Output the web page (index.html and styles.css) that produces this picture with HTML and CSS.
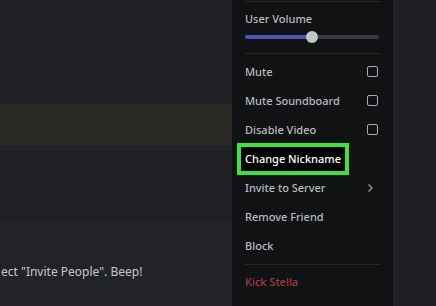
FILE: index.html
```html
<!DOCTYPE html>
<html>
<head>
<meta charset="utf-8">
<link rel="stylesheet" href="styles.css">
</head>
<body>
<div class="app">
  <div class="chat">
    <div class="chat-top"></div>
    <div class="mention"></div>
    <div class="chat-mid"></div>
    <div class="chat-bottom">
      <div class="msg-line"><span class="msg">ect "Invite People". Beep!</span></div>
    </div>
  </div>
  <div class="menu">
    <div class="sep sep-top"></div>
    <div class="vol-label">User Volume</div>
    <div class="slider">
      <div class="fill" style="width:67px"></div>
      <div class="thumb"></div>
      <div class="rest"></div>
    </div>
    <div class="sep sep-vol"></div>
    <div class="items">
      <div class="item"><span>Mute</span><span class="box"></span></div>
      <div class="item"><span>Mute Soundboard</span><span class="box"></span></div>
      <div class="item"><span>Disable Video</span><span class="box"></span></div>
      <div class="item"><span class="hl">Change Nickname</span></div>
      <div class="item"><span>Invite to Server</span>
        <svg class="chev" width="8" height="10" viewBox="0 0 8 10"><path d="M2.5 1.5 L6 5 L2.5 8.5" fill="none" stroke="#9a9ca1" stroke-width="1.3"/></svg>
      </div>
      <div class="item"><span>Remove Friend</span></div>
      <div class="item"><span>Block</span></div>
    </div>
    <div class="sep sep-bottom"></div>
    <div class="item danger"><span>Kick Stella</span></div>
  </div>
  <div class="side"></div>
</div>
</body>
</html>
```
FILE: styles.css
```css
html, body {
  margin: 0;
  padding: 0;
  width: 436px;
  height: 306px;
  overflow: hidden;
  background: #1e1f22;
  font-family: "Noto Sans", "Open Sans", sans-serif;
}
.app {
  display: flex;
  width: 436px;
  height: 306px;
}
.chat {
  width: 232px;
  display: flex;
  flex-direction: column;
  background: #222327;
}
.chat-top {
  height: 104px;
  background: #212226;
}
.mention {
  height: 41px;
  background: #2b2924;
}
.chat-mid {
  height: 76px;
  background: #202125;
}
.chat-bottom {
  flex: 1;
  background: #222328;
  padding-top: 38px;
}
.msg-line {
  padding-left: 1px;
  white-space: nowrap;
}
.msg {
  font-size: 12px;
  line-height: 16px;
  color: #c6c8cc;
}
.menu {
  width: 161px;
  box-sizing: border-box;
  padding: 0 13px;
  background: #111214;
  display: flex;
  flex-direction: column;
}
.side {
  flex: 1;
  background: #1d1e21;
  border-left: 5px solid #202124;
}
.sep {
  height: 1px;
  background: #25262a;
}
.sep-top {
  margin-top: 1px;
}
.vol-label {
  margin-top: 9px;
  font-size: 11px;
  line-height: 16px;
  color: #b9bbc0;
  font-weight: 500;
}
.slider {
  margin-top: 4px;
  height: 12px;
  display: flex;
  align-items: center;
  width: 134px;
}
.fill {
  height: 4px;
  background: #4c53b0;
  border-radius: 2px 0 0 2px;
}
.thumb {
  width: 12px;
  height: 12px;
  border-radius: 50%;
  background: #c6c7c9;
  margin: 0 -6px;
  position: relative;
  z-index: 1;
}
.rest {
  flex: 1;
  height: 4px;
  background: #3a3b40;
  border-radius: 0 2px 2px 0;
}
.sep-vol {
  margin-top: 10px;
  width: 135px;
}
.items {
  padding-top: 3px;
  display: flex;
  flex-direction: column;
}
.item {
  height: 29px;
  display: flex;
  align-items: center;
  justify-content: space-between;
  font-size: 11px;
  font-weight: 500;
  color: #b9bbc0;
}
.box {
  width: 9px;
  height: 9px;
  border: 1.5px solid #a9abb0;
  border-radius: 2px;
  margin-right: 2px;
}
.chev {
  margin-right: 6px;
}
.hl {
  color: #ffffff;
  background: #000000;
  padding: 5px 4px;
  margin-left: -8px;
  border: 4px solid #3be33b;
  line-height: 14px;
}
.sep-bottom {
  margin-top: 4px;
}
.danger {
  margin-top: 2px;
  color: #a33a40;
}
```
